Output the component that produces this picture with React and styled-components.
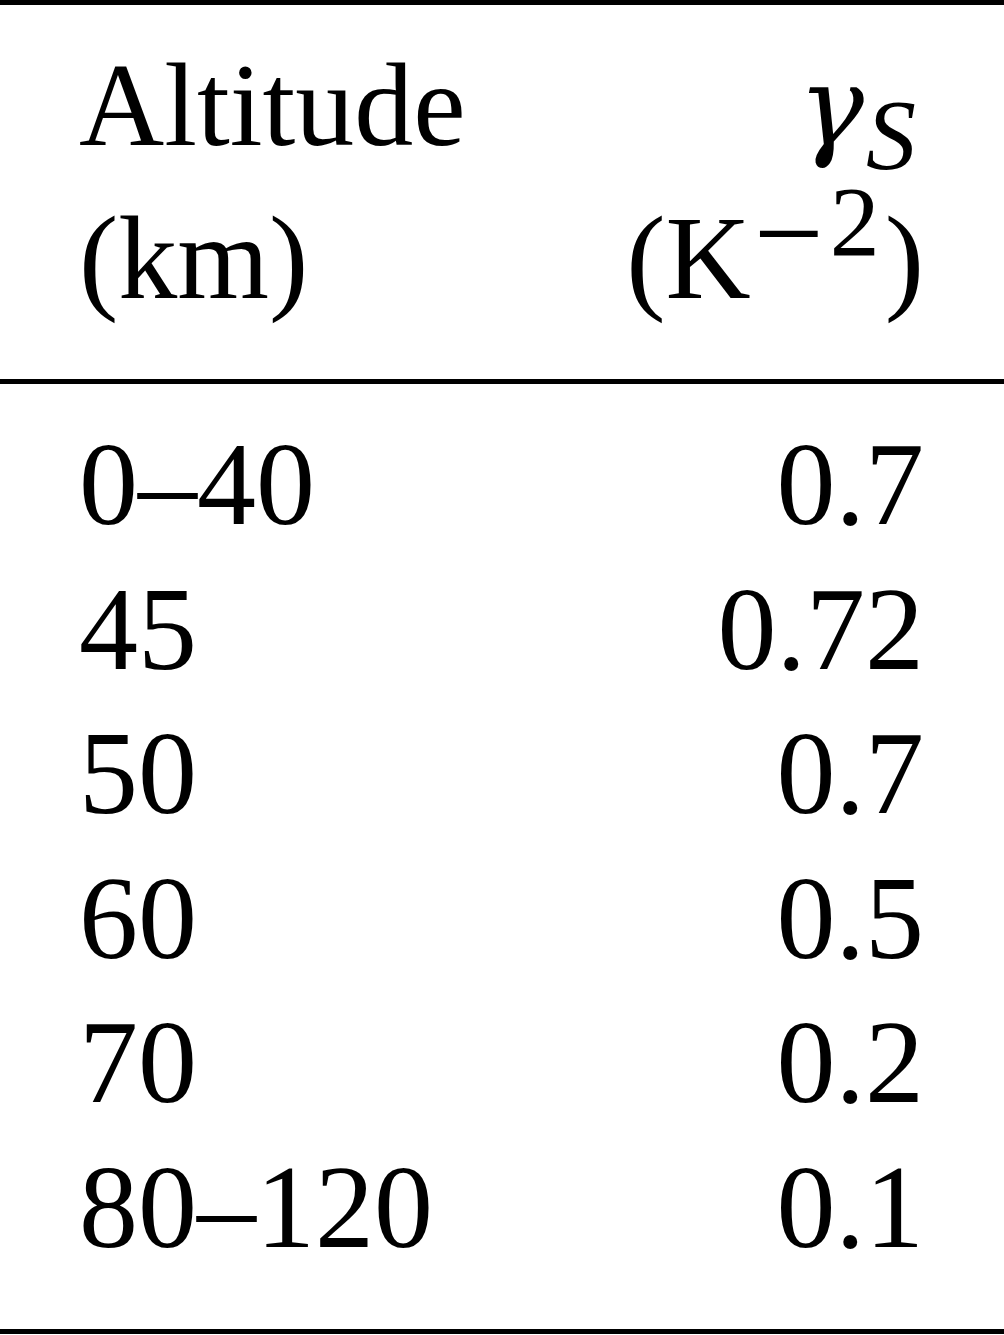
import React from "react";
import styled, { createGlobalStyle } from "styled-components";

const Global = createGlobalStyle`
  html, body { margin: 0; padding: 0; background: #fff; }
  body { font-family: "Liberation Serif", "Times New Roman", serif; color: #000; }
`;

const Table = styled.div`
  width: 1004px;
  border-top: 5px solid #000;
  border-bottom: 5px solid #000;
  font-family: "Liberation Serif", "Times New Roman", serif;
  font-size: 118px;
  color: #000;
`;

const Section = styled.div`
  display: grid;
  grid-template-columns: 1fr auto;
  padding: ${(p) => p.$padTop}px 80px ${(p) => p.$padBottom}px 79px;
  line-height: ${(p) => p.$lineHeight}px;
  border-bottom: ${(p) => (p.$rule ? "5px solid #000" : "none")};
`;

const Cell = styled.div`
  text-align: ${(p) => (p.$right ? "right" : "left")};
  white-space: nowrap;
`;

const Greek = styled.span`
  font-family: "DejaVu Serif", "Liberation Serif", serif;
  font-style: italic;
  font-size: 110px;
  line-height: 0;
`;

const Sub = styled.span`
  font-size: 100px;
  font-style: italic;
  line-height: 0;
  vertical-align: -23px;
  padding-left: 2px;
  padding-right: 8px;
`;

const Sup = styled.span`
  font-size: 100px;
  line-height: 0;
  vertical-align: 43px;
  padding-left: 3px;
  padding-right: 5px;
`;

const Minus = styled.span`
  font-size: 124px;
  line-height: 0;
  vertical-align: -20px;
  padding-right: 6px;
`;

const rows = [
  ["0–40", "0.7"],
  ["45", "0.72"],
  ["50", "0.7"],
  ["60", "0.5"],
  ["70", "0.2"],
  ["80–120", "0.1"],
];

export default function App() {
  return (
    <>
      <Global />
      <Table>
        <Section $padTop={24} $padBottom={44} $lineHeight={153} $rule>
          <Cell>Altitude</Cell>
          <Cell $right>
            <Greek>γ</Greek>
            <Sub>S</Sub>
          </Cell>
          <Cell>(km)</Cell>
          <Cell $right>
            (K<Sup><Minus>−</Minus>2</Sup>)
          </Cell>
        </Section>
        <Section $padTop={29} $padBottom={48} $lineHeight={144.6}>
          {rows.map(([alt, val]) => (
            <React.Fragment key={alt + val}>
              <Cell>{alt}</Cell>
              <Cell $right>{val}</Cell>
            </React.Fragment>
          ))}
        </Section>
      </Table>
    </>
  );
}
